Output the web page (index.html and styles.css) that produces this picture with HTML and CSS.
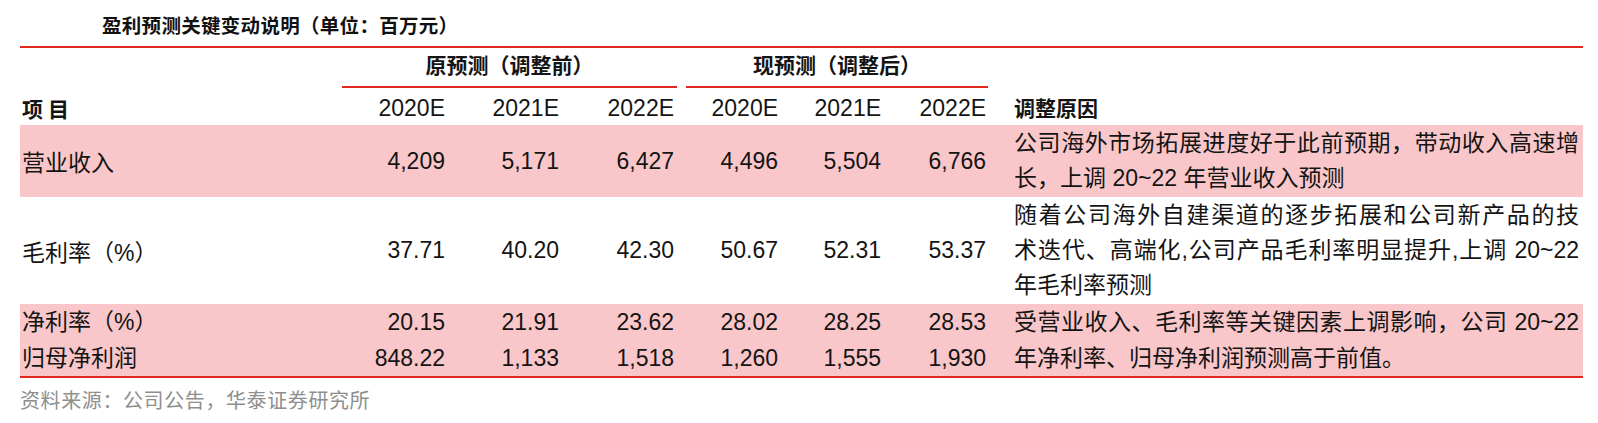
FILE: index.html
```html
<!DOCTYPE html>
<html lang="zh-CN">
<head>
<meta charset="utf-8">
<title>盈利预测关键变动说明</title>
<link rel="stylesheet" href="styles.css">
</head>
<body>
<div class="page">
  <div class="title">盈利预测关键变动说明（单位：百万元）</div>
  <table class="fc">
    <colgroup>
      <col class="w-lab"><col class="w-a"><col class="w-a"><col class="w-a2">
      <col class="w-b"><col class="w-b2"><col class="w-b3"><col class="w-rs">
    </colgroup>
    <thead>
      <tr class="grp">
        <th></th>
        <th colspan="3"><div class="gt g1">原预测（调整前）</div></th>
        <th colspan="3"><div class="gt g2">现预测（调整后）</div></th>
        <th></th>
      </tr>
      <tr class="yr">
        <th class="lab xm">项目</th>
        <th class="num">2020E</th>
        <th class="num">2021E</th>
        <th class="num">2022E</th>
        <th class="num">2020E</th>
        <th class="num">2021E</th>
        <th class="num">2022E</th>
        <th class="rs">调整原因</th>
      </tr>
    </thead>
    <tbody>
      <tr class="pink r1">
        <td class="lab">营业收入</td>
        <td class="num">4,209</td>
        <td class="num">5,171</td>
        <td class="num">6,427</td>
        <td class="num">4,496</td>
        <td class="num">5,504</td>
        <td class="num">6,766</td>
        <td class="rs"><span class="ln jl">公司海外市场拓展进度好于此前预期，带动收入高速增</span><span class="ln">长，上调 20~22 年营业收入预测</span></td>
      </tr>
      <tr class="r2">
        <td class="lab">毛利率（%）</td>
        <td class="num">37.71</td>
        <td class="num">40.20</td>
        <td class="num">42.30</td>
        <td class="num">50.67</td>
        <td class="num">52.31</td>
        <td class="num">53.37</td>
        <td class="rs"><span class="ln jl">随着公司海外自建渠道的逐步拓展和公司新产品的技</span><span class="ln jl">术迭代、高端化,公司产品毛利率明显提升,上调 20~22</span><span class="ln">年毛利率预测</span></td>
      </tr>
      <tr class="pink r3">
        <td class="lab">净利率（%）</td>
        <td class="num">20.15</td>
        <td class="num">21.91</td>
        <td class="num">23.62</td>
        <td class="num">28.02</td>
        <td class="num">28.25</td>
        <td class="num">28.53</td>
        <td class="rs rs2" rowspan="2"><span class="ln jl">受营业收入、毛利率等关键因素上调影响，公司 20~22</span><span class="ln">年净利率、归母净利润预测高于前值。</span></td>
      </tr>
      <tr class="pink r4">
        <td class="lab">归母净利润</td>
        <td class="num">848.22</td>
        <td class="num">1,133</td>
        <td class="num">1,518</td>
        <td class="num">1,260</td>
        <td class="num">1,555</td>
        <td class="num">1,930</td>
      </tr>
    </tbody>
  </table>
  <div class="src">资料来源：公司公告，华泰证券研究所</div>
</div>
</body>
</html>
```

FILE: styles.css
```css
html, body {
  margin: 0;
  padding: 0;
  background: #ffffff;
}

body {
  font-family: "Liberation Sans", "Noto Sans CJK SC", sans-serif;
  color: #141414;
}

.page {
  padding-left: 20px;
}

.title {
  font-family: "Noto Sans CJK SC", sans-serif;
  font-weight: 700;
  font-size: 19.5px;
  line-height: 20px;
  padding: 15px 0 11px 82px;
  letter-spacing: 0.3px;
  color: #111;
}

.fc {
  width: 1563px;
  table-layout: fixed;
  border-collapse: separate;
  border-spacing: 0;
  border-top: 2px solid #e0281c;
  border-bottom: 2px solid #e0281c;
  font-size: 23px;
}

.w-lab { width: 315px; }
.w-a { width: 114px; }
.w-a2 { width: 115px; }
.w-b { width: 104px; }
.w-b2 { width: 103px; }
.w-b3 { width: 105px; }
.w-rs { width: 593px; }

.fc th, .fc td {
  padding: 0;
  vertical-align: middle;
  font-weight: 400;
}

.grp th {
  height: 40px;
}

.gt {
  font-family: "Noto Sans CJK SC", sans-serif;
  font-weight: 700;
  font-size: 21px;
  line-height: 24px;
  padding: 4px 0 10px;
  border-bottom: 2px solid #e0281c;
  text-align: center;
}

.g1 { margin: 0 1px 0 7px; }
.g2 { margin: 0 2px 0 8px; }

.yr th {
  height: 37px;
  padding-top: 3px;
  box-sizing: border-box;
}

.yr th.lab, .yr th.rs {
  font-family: "Noto Sans CJK SC", sans-serif;
  font-weight: 700;
  font-size: 21px;
}

.yr th.xm {
  letter-spacing: 5px;
}

.lab {
  text-align: left;
  padding-left: 2px !important;
}

.num {
  text-align: right;
  padding-right: 4px !important;
}

.rs {
  text-align: left;
  padding: 1px 4px 1px 24px !important;
}

.ln {
  display: block;
  line-height: 35px;
}

.jl {
  text-align: justify;
  text-align-last: justify;
}

.pink {
  background: #f9c7c9;
}

.r1 td { height: 72px; box-sizing: border-box; }
.r2 td { height: 107px; box-sizing: border-box; }

.r3 td, .r4 td {
  height: 36px;
  line-height: 36px;
}

.rs2 {
  padding: 0 4px 0 24px !important;
}

.rs2 .ln {
  line-height: 36px;
}

.src {
  font-family: "Noto Sans CJK SC", sans-serif;
  font-size: 20px;
  line-height: 24px;
  letter-spacing: 0.6px;
  margin-top: 10px;
  color: #8e8e8e;
}
```
